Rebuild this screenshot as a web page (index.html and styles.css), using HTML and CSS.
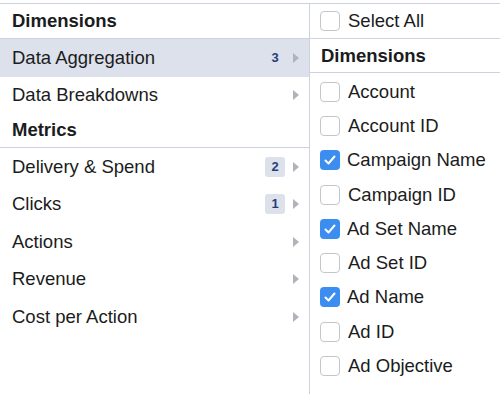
FILE: index.html
```html
<!DOCTYPE html>
<html lang="en">
<head>
  <meta charset="UTF-8" />
  <title>Columns</title>
  <link rel="stylesheet" href="styles.css">
</head>
<body>
  <div class="menu">
    <div class="groups">
      <div class="group-title">Dimensions</div>
      <div class="group-item selected">
        <span class="label">Data Aggregation</span>
        <span class="badge">3</span>
        <span class="arrow"></span>
      </div>
      <div class="group-item">
        <span class="label">Data Breakdowns</span>
        <span class="arrow"></span>
      </div>
      <div class="group-title">Metrics</div>
      <div class="group-item">
        <span class="label">Delivery &amp; Spend</span>
        <span class="badge">2</span>
        <span class="arrow"></span>
      </div>
      <div class="group-item">
        <span class="label">Clicks</span>
        <span class="badge">1</span>
        <span class="arrow"></span>
      </div>
      <div class="group-item">
        <span class="label">Actions</span>
        <span class="arrow"></span>
      </div>
      <div class="group-item">
        <span class="label">Revenue</span>
        <span class="arrow"></span>
      </div>
      <div class="group-item">
        <span class="label">Cost per Action</span>
        <span class="arrow"></span>
      </div>
    </div>

    <div class="columns">
      <label class="select-all">
        <span class="check"></span>
        Select All
      </label>
      <div class="col-title">Dimensions</div>
      <div class="col-list" id="colList"></div>
    </div>
  </div>

  <script>
    const columns = [
      ["Account", false],
      ["Account ID", false],
      ["Campaign Name", true],
      ["Campaign ID", false],
      ["Ad Set Name", true],
      ["Ad Set ID", false],
      ["Ad Name", true],
      ["Ad ID", false],
      ["Ad Objective", false]
    ];

    const tick = '<svg viewBox="0 0 18 18" width="18" height="18"><path d="M4.5 9.5l3 3L13.5 5.5" fill="none" stroke="#fff" stroke-width="2" stroke-linecap="round" stroke-linejoin="round"/></svg>';

    const list = document.getElementById("colList");
    columns.forEach(([name, on]) => {
      const row = document.createElement("label");
      row.className = "col-item";
      row.innerHTML = `<span class="check${on ? " on" : ""}">${on ? tick : ""}</span>${name}`;
      list.appendChild(row);
    });
  </script>
</body>
</html>
```

FILE: styles.css
```css
body {
  margin: 0;
  font-family: 'Liberation Sans', Arial, sans-serif;
  font-size: 18.5px;
  color: #1a1c20;
  background: #fff;
}

.menu {
  display: flex;
  margin-top: 3px;
  height: calc(100vh - 3px);
  border-top: 1px solid #cdd2dc;
  box-sizing: border-box;
}

.groups {
  width: 309px;
  border-right: 1px solid #cdd2dc;
}

.group-title {
  height: 34px;
  line-height: 33px;
  padding-left: 12px;
  font-weight: bold;
  border-bottom: 1px solid #cdd2dc;
}

.group-title + .group-item + .group-item + .group-title {
  height: 33px;
  line-height: 32px;
}

.group-item {
  display: flex;
  align-items: center;
  height: 37.5px;
  padding: 0 10px 0 12px;
}

.group-item.selected {
  background: #dde1eb;
}

.label {
  flex: 1;
}

.badge {
  min-width: 20px;
  height: 20px;
  line-height: 20px;
  border-radius: 3px;
  background: #dde1eb;
  color: #263f78;
  font-size: 13px;
  font-weight: bold;
  text-align: center;
}

.arrow {
  width: 0;
  height: 0;
  margin-left: 8px;
  border-top: 5px solid transparent;
  border-bottom: 5px solid transparent;
  border-left: 6px solid #b0b3b9;
}

.columns {
  flex: 1;
}

.select-all,
.col-item {
  display: flex;
  align-items: center;
  padding-left: 10px;
}

.select-all {
  height: 34px;
  border-bottom: 1px solid #cdd2dc;
}

.col-title {
  height: 33px;
  line-height: 33px;
  padding-left: 11px;
  font-weight: bold;
  border-bottom: 1px solid #cdd2dc;
}

.col-list {
  padding-top: 1.5px;
}

.col-item {
  height: 34.3px;
}

.check {
  display: inline-flex;
  width: 18px;
  height: 18px;
  margin-right: 8px;
  border: 1px solid #c4c6ca;
  border-radius: 4px;
  background: #fff;
}

.check.on {
  width: 20px;
  height: 20px;
  margin-right: 7px;
  border: none;
  background: #3c8df0;
  align-items: center;
  justify-content: center;
}
```
